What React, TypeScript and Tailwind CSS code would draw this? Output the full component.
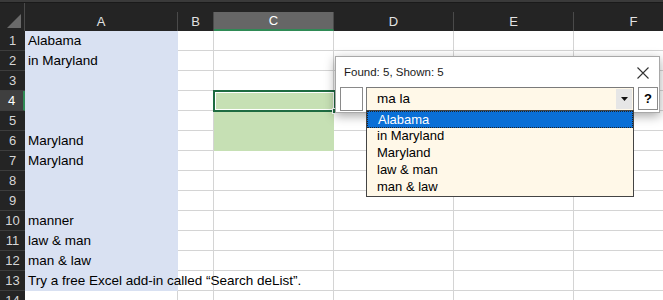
import { useState } from "react";

const COLS = ["A", "B", "C", "D", "E", "F"];
const COL_W = ["w-[153px]", "w-[36px]", "w-[120px]", "w-[120px]", "w-[120px]", "w-[120px]"];

const CELLS: Record<number, string> = {
  1: "Alabama",
  2: "in Maryland",
  6: "Maryland",
  7: "Maryland",
  10: "manner",
  11: "law & man",
  12: "man & law",
  13: "Try a free Excel add-in called “Search deList”.",
};

const MATCHES = ["Alabama", "in Maryland", "Maryland", "law & man", "man & law"];

const SheetRow = ({ row }: { row: number }) => {
  const text = CELLS[row];
  const isActiveRow = row === 4;
  return (
    <div className="flex h-[20px] shrink-0">
      <div
        className={`w-[25px] shrink-0 flex items-center justify-center text-[13px] border-b border-[#3d3d3d] ${
          isActiveRow
            ? "bg-[#3f3f3f] text-white border-r-2 border-r-[#2f8a55]"
            : "bg-[#242424] text-[#d6d6d6]"
        }`}
      >
        {row}
      </div>
      {/* column A: blue filled, holds the text (may overflow into next cells) */}
      <div
        className={`${COL_W[0]} shrink-0 relative flex items-center pl-[3px] ${
          row <= 13 ? "bg-[#d9e1f2]" : "border-r border-b border-[#d4d4d4]"
        }`}
      >
        {text ? (
          <span className="absolute left-[3px] whitespace-nowrap text-[13.5px] text-black z-10">
            {text}
          </span>
        ) : null}
      </div>
      <div className={`${COL_W[1]} shrink-0 border-r border-b border-[#d4d4d4]`} />
      <div
        className={`${COL_W[2]} shrink-0 border-r border-b ${
          row >= 4 && row <= 6 ? "bg-[#c6e0b4] border-[#c6e0b4]" : "border-[#d4d4d4]"
        }`}
      />
      <div className={`${COL_W[3]} shrink-0 border-r border-b border-[#d4d4d4]`} />
      <div className={`${COL_W[4]} shrink-0 border-r border-b border-[#d4d4d4]`} />
      <div className={`${COL_W[5]} shrink-0 border-r border-b border-[#d4d4d4]`} />
    </div>
  );
};

const SearchPopup = () => {
  const [query, setQuery] = useState("ma la");
  const [selected, setSelected] = useState(0);

  return (
    <div className="absolute left-[335px] top-[56px] w-[325px] h-[57px] bg-white border border-[#a8a8a8] shadow-[0_3px_10px_rgba(0,0,0,0.35)] font-['Liberation_Sans',sans-serif] z-20">
      <div className="flex items-center justify-between h-[30px] pl-[8px] pr-[9px]">
        <span className="text-[11.5px] text-[#1a1a1a] pt-[2px]">Found: 5, Shown: 5</span>
        <svg width="14" height="14" viewBox="0 0 14 14" className="mt-[1px]">
          <path d="M1.5 1.5 L12.5 12.5 M12.5 1.5 L1.5 12.5" stroke="#333" strokeWidth="1.1" />
        </svg>
      </div>
      <div className="flex items-start pl-[4px] gap-[3px]">
        <div className="w-[23px] h-[24px] border border-[#8a8a8a] bg-white" />
        <div className="relative w-[268px]">
          <div className="flex items-center h-[24px] border border-[#7a7a7a] bg-[#fff8e8]">
            <input
              value={query}
              onChange={(e) => setQuery(e.target.value)}
              className="flex-1 min-w-0 bg-transparent outline-none pl-[10px] text-[13.5px] text-black caret-black"
            />
            <div className="w-[16px] h-[20px] mr-[1px] bg-[#e6e6e6] flex items-center justify-center">
              <svg width="7" height="4" viewBox="0 0 7 4">
                <path d="M0 0 H7 L3.5 4 Z" fill="#111" />
              </svg>
            </div>
          </div>
          <ul className="absolute left-0 top-[23px] w-[268px] h-[87px] border border-[#444] bg-[#fff8e8] text-[13px] text-black">
            {MATCHES.map((m, i) => (
              <li
                key={m}
                onClick={() => setSelected(i)}
                className={`h-[17px] leading-[16px] pl-[10px] ${
                  i === selected
                    ? "bg-[#0a6fd6] text-white border border-dotted border-[#222] pl-[9px]"
                    : ""
                }`}
              >
                {m}
              </li>
            ))}
          </ul>
        </div>
        <div className="w-[20px] h-[23px] ml-[1px] border border-[#8a8a8a] bg-white flex items-center justify-center text-[13px] font-bold text-black">
          ?
        </div>
      </div>
    </div>
  );
};

const App = () => {
  const rows = Array.from({ length: 14 }, (_, i) => i + 1);

  return (
    <div className="relative w-[663px] h-[300px] overflow-hidden bg-white font-['Liberation_Sans',sans-serif]">
      {/* top strip above the headers */}
      <div className="h-[3px] bg-[#3a3a3a] border-b border-[#1a1a1a]" />
      <div className="flex h-[28px] bg-[#242424]">
        <div className="w-[25px] shrink-0 relative border-r border-[#4a4a4a]">
          <svg width="14" height="14" viewBox="0 0 14 14" className="absolute right-[3px] bottom-[3px]">
            <path d="M14 0 V14 H0 Z" fill="#6a6a6a" />
          </svg>
        </div>
        {COLS.map((c, i) => (
          <div key={c} className={`${COL_W[i]} shrink-0 flex flex-col justify-end`}>
            <div
              className={`h-[19px] flex items-center justify-center text-[13px] border-r border-[#4a4a4a] ${
                c === "C"
                  ? "bg-[#666] text-white border-b-2 border-b-[#2f8a55]"
                  : "text-[#e2e2e2]"
              }`}
            >
              {c}
            </div>
          </div>
        ))}
      </div>
      {rows.map((r) => (
        <SheetRow key={r} row={r} />
      ))}

      {/* active cell C4 */}
      <div className="absolute left-[213px] top-[90px] w-[123px] h-[22px] border-2 border-[#1e6b41] z-10">
        <div className="w-full h-full border border-white" />
        <div className="absolute right-[-4px] bottom-[-4px] w-[6px] h-[6px] bg-[#1e6b41] border border-white" />
      </div>

      <SearchPopup />
    </div>
  );
};

export default App;
